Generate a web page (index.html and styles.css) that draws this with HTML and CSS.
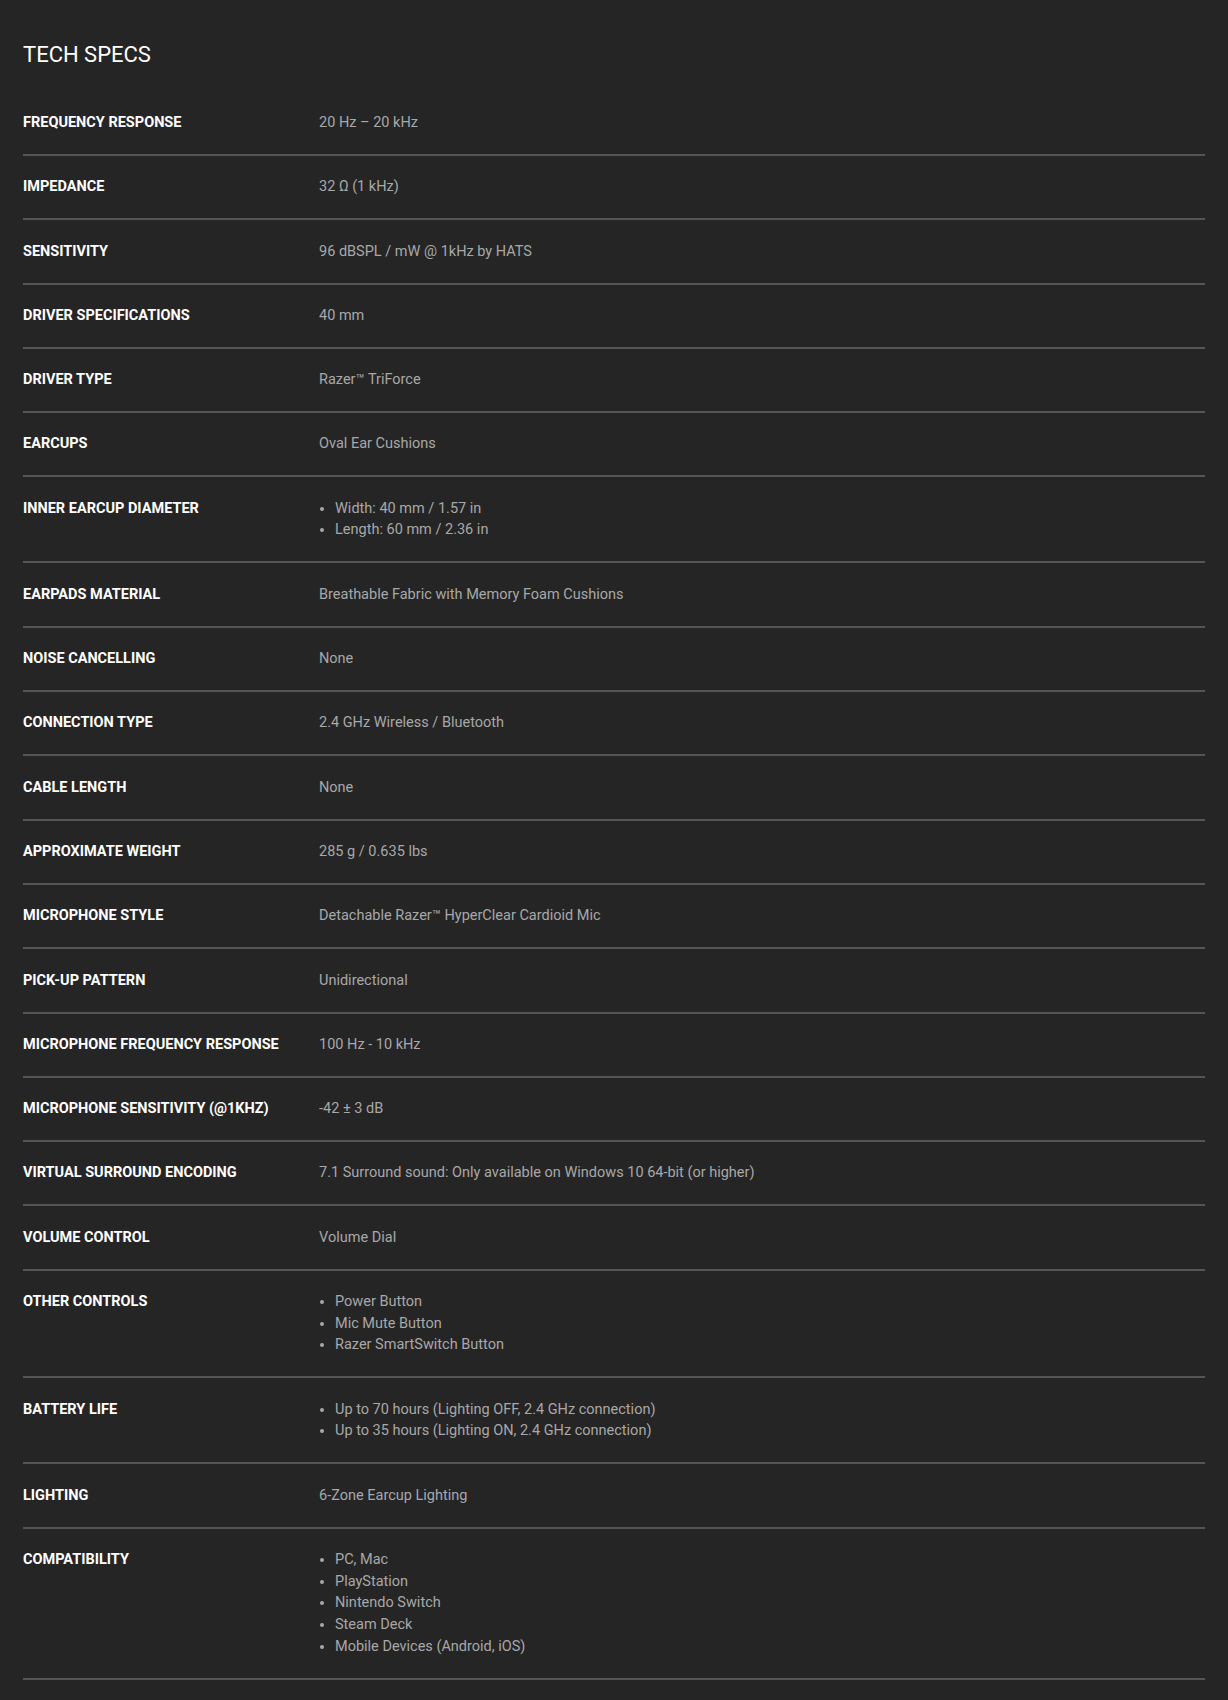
FILE: index.html
```html
<!DOCTYPE html>
<html lang="en">
<head>
<meta charset="utf-8">
<title>Tech Specs</title>
<link rel="stylesheet" href="styles.css">
</head>
<body>
<section class="specs">
  <h2 class="specs-title">TECH SPECS</h2>
  <div class="spec-list">
    <div class="spec-row"><div class="spec-label">Frequency Response</div><div class="spec-value">20 Hz – 20 kHz</div></div>
    <div class="spec-row"><div class="spec-label">Impedance</div><div class="spec-value">32 Ω (1 kHz)</div></div>
    <div class="spec-row"><div class="spec-label">Sensitivity</div><div class="spec-value">96 dBSPL / mW @ 1kHz by HATS</div></div>
    <div class="spec-row"><div class="spec-label">Driver Specifications</div><div class="spec-value">40 mm</div></div>
    <div class="spec-row"><div class="spec-label">Driver Type</div><div class="spec-value">Razer™ TriForce</div></div>
    <div class="spec-row"><div class="spec-label">Earcups</div><div class="spec-value">Oval Ear Cushions</div></div>
    <div class="spec-row"><div class="spec-label">Inner Earcup Diameter</div><div class="spec-value"><ul class="bullets"><li>Width: 40 mm / 1.57 in</li><li>Length: 60 mm / 2.36 in</li></ul></div></div>
    <div class="spec-row"><div class="spec-label">Earpads Material</div><div class="spec-value">Breathable Fabric with Memory Foam Cushions</div></div>
    <div class="spec-row"><div class="spec-label">Noise Cancelling</div><div class="spec-value">None</div></div>
    <div class="spec-row"><div class="spec-label">Connection Type</div><div class="spec-value">2.4 GHz Wireless / Bluetooth</div></div>
    <div class="spec-row"><div class="spec-label">Cable Length</div><div class="spec-value">None</div></div>
    <div class="spec-row"><div class="spec-label">Approximate Weight</div><div class="spec-value">285 g / 0.635 lbs</div></div>
    <div class="spec-row"><div class="spec-label">Microphone Style</div><div class="spec-value">Detachable Razer™ HyperClear Cardioid Mic</div></div>
    <div class="spec-row"><div class="spec-label">Pick-up Pattern</div><div class="spec-value">Unidirectional</div></div>
    <div class="spec-row"><div class="spec-label">Microphone Frequency Response</div><div class="spec-value">100 Hz - 10 kHz</div></div>
    <div class="spec-row"><div class="spec-label">Microphone Sensitivity (@1kHz)</div><div class="spec-value">-42 ± 3 dB</div></div>
    <div class="spec-row"><div class="spec-label">Virtual Surround Encoding</div><div class="spec-value">7.1 Surround sound: Only available on Windows 10 64-bit (or higher)</div></div>
    <div class="spec-row"><div class="spec-label">Volume Control</div><div class="spec-value">Volume Dial</div></div>
    <div class="spec-row"><div class="spec-label">Other Controls</div><div class="spec-value"><ul class="bullets"><li>Power Button</li><li>Mic Mute Button</li><li>Razer SmartSwitch Button</li></ul></div></div>
    <div class="spec-row"><div class="spec-label">Battery Life</div><div class="spec-value"><ul class="bullets"><li>Up to 70 hours (Lighting OFF, 2.4 GHz connection)</li><li>Up to 35 hours (Lighting ON, 2.4 GHz connection)</li></ul></div></div>
    <div class="spec-row"><div class="spec-label">Lighting</div><div class="spec-value">6-Zone Earcup Lighting</div></div>
    <div class="spec-row"><div class="spec-label">Compatibility</div><div class="spec-value"><ul class="bullets"><li>PC, Mac</li><li>PlayStation</li><li>Nintendo Switch</li><li>Steam Deck</li><li>Mobile Devices (Android, iOS)</li></ul></div></div>
  </div>
</section>
</body>
</html>
```

FILE: styles.css
```css
html, body {
  margin: 0;
  padding: 0;
  background: #252525;
}

body {
  font-family: Roboto, "Liberation Sans", Arial, sans-serif;
  color: #ffffff;
}

.specs {
  padding: 42px 23px 0;
}

.specs-title {
  margin: 0 0 23.7px;
  font-size: 22px;
  line-height: 26px;
  font-weight: 400;
  color: #ffffff;
}

.spec-row {
  display: grid;
  grid-template-columns: 296px 1fr;
  padding: 20.3px 0;
  border-bottom: 2px solid #555555;
  font-size: 14.5px;
  line-height: 21.7px;
}

.spec-label {
  font-weight: 700;
  text-transform: uppercase;
  color: #ffffff;
}

.spec-value {
  color: #a8a8a8;
}

.bullets {
  margin: 0;
  padding: 0;
  list-style: none;
}

.bullets li {
  display: flex;
  align-items: center;
}

.bullets li::before {
  content: "";
  flex: none;
  width: 4px;
  height: 4px;
  border-radius: 50%;
  background: #a8a8a8;
  margin: 0 11px 0 1px;
}
```
